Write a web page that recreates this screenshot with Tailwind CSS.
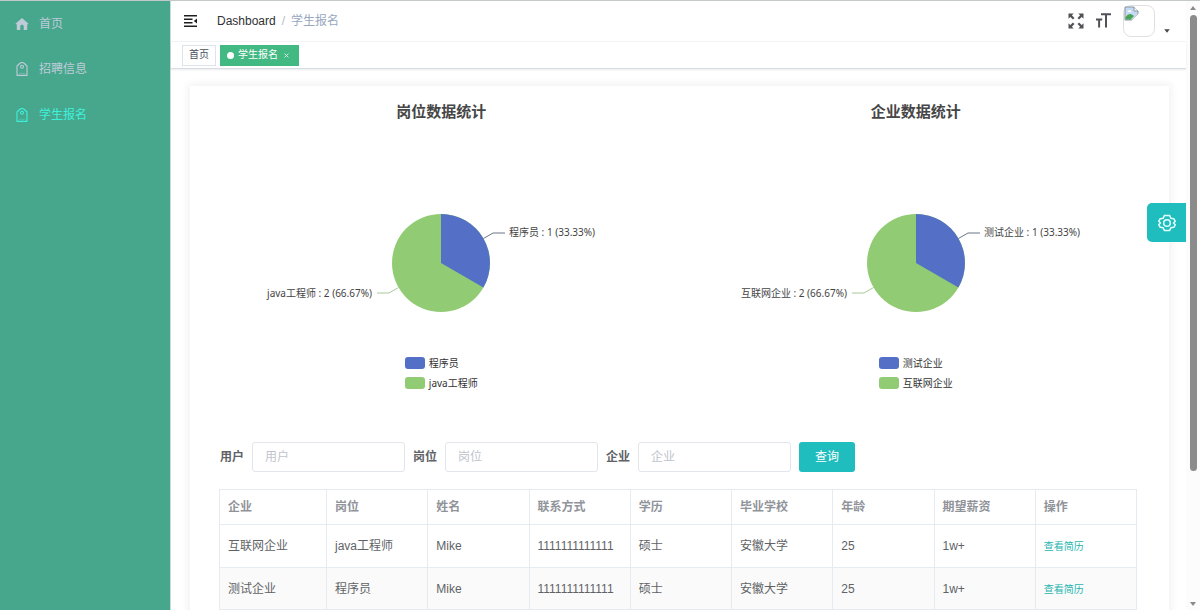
<!DOCTYPE html>
<html lang="zh-CN">
<head>
<meta charset="utf-8">
<title>学生报名</title>
<script src="https://cdn.jsdelivr.net/npm/@tailwindcss/browser@4"></script>
</head>
<body class="flex h-screen overflow-hidden border-t border-[#c4c8c8] bg-white font-['Liberation_Sans','Noto_Sans_CJK_SC',sans-serif] text-xs text-[#606266]">

<aside class="w-[171px] shrink-0 border-r border-[#c3ddd4] bg-[#47a78c]">
  <nav class="flex flex-col text-[#bfcbd9]">
    <a href="#" class="flex h-[45px] items-center gap-[10px] pl-[15px]">
      <svg class="size-[14px]" viewBox="0 0 14 14" fill="currentColor"><path d="M7 .9 13.2 6.4c.4.4.2.8-.3.8h-.7v5.2c0 .4-.2.6-.6.6H8.700V9.400c0-1-.7-1.600-1.700-1.600s-1.700.6-1.700 1.600V13H2.400c-.4 0-.6-.2-.6-.6V7.200h-.7c-.5 0-.7-.4-.3-.8z"/></svg>
      <span>首页</span>
    </a>
    <a href="#" class="flex h-[46px] items-center gap-[10px] pl-[15px]">
      <svg class="size-[14px]" viewBox="0 0 14 14" fill="none" stroke="currentColor" stroke-width="1.100"><path d="M2 13.400V4L5.200 1Q7 0 8.800 1L12 4V13.400Z" stroke-linejoin="round"/><circle cx="7" cy="4.800" r="1.500"/><path d="M4 11.400h6" opacity=".35"/></svg>
      <span>招聘信息</span>
    </a>
    <a href="#" aria-current="page" class="flex h-[45px] items-center gap-[10px] pl-[15px] text-[#3ff0dc]">
      <svg class="size-[14px]" viewBox="0 0 14 14" fill="none" stroke="currentColor" stroke-width="1.100"><path d="M2 13.400V4L5.200 1Q7 0 8.800 1L12 4V13.400Z" stroke-linejoin="round"/><circle cx="7" cy="4.800" r="1.500"/><path d="M4 11.400h6" opacity=".35"/></svg>
      <span>学生报名</span>
    </a>
  </nav>
</aside>

<div class="relative flex min-w-0 flex-1 flex-col">
  <header class="flex h-[41px] shrink-0 items-center border-b border-[#f3f4f5] pl-[13px] pr-[16px] pb-px">
    <button type="button" aria-label="收起菜单" class="mr-[20px]">
      <svg class="block h-[12px] w-[13px]" viewBox="0 0 13 12" fill="none" stroke="#1f1f1f" stroke-width="1.400"><path d="M0 .8h13M0 4.200h8.500M0 7.700h8.500M0 11.200h13"/><path d="M13 3.600v4.800L9.800 6z" fill="#1f1f1f" stroke="none"/></svg>
    </button>
    <nav class="flex flex-1 items-center gap-[6px]" aria-label="面包屑">
      <a href="#" class="text-[#303133]">Dashboard</a><span class="text-[#b5bac3]">/</span><span class="text-[#97a8be]">学生报名</span>
    </nav>
    <button type="button" aria-label="全屏" class="mr-[12px]">
      <svg class="block size-[16px]" viewBox="0 0 16 16" fill="#505257" stroke="#505257" stroke-width="2.200"><g id="arrow"><path d="M2.600 2.600 5.700 5.700" fill="none"/><path d="M.5.500h5.200L.5 5.700z" stroke="none"/></g><use href="#arrow" transform="rotate(90 8 8)"/><use href="#arrow" transform="rotate(180 8 8)"/><use href="#arrow" transform="rotate(270 8 8)"/></svg>
    </button>
    <button type="button" aria-label="字体大小" class="mr-[12px]">
      <svg class="block h-[15px] w-[15px]" viewBox="0 0 15 15" fill="none" stroke="#505257" stroke-width="2"><path d="M5 1.200H15M10 1.200V14.500M0 6.500h6.200M3.100 6.500v8"/></svg>
    </button>
    <button type="button" aria-label="用户菜单" class="flex items-end gap-[9px]">
      <span class="block size-[32px] rounded-lg border border-[#e0e0e0]">
        <svg class="block size-[16px]" viewBox="0 0 16 16"><path d="M1 1h9l4 4v3L8 14H1z" fill="#c5daf5" stroke="#8b949c"/><path d="M10 1v4h4" fill="#fff" stroke="#8b949c"/><path d="M3.500 6Q3.800 4 5.500 4.200 7.500 4.500 7.500 6z" fill="#fff"/><path d="M1.500 13.500V11Q5 6.500 8.500 9L10 10l-3.500 3.500z" fill="#49a553"/><path d="m7.500 14.500 7-7v2l-5 5z" fill="#fff"/></svg>
      </span>
      <svg class="mb-[4px] h-[4px] w-[6px]" viewBox="0 0 6 4"><path d="M.2.200h5.600L3 3.800z" fill="#45484d"/></svg>
    </button>
  </header>

  <div class="flex h-[27px] shrink-0 items-center gap-1 border-b border-[#d8dce5] pl-[11px] text-[10px] shadow-[0_1px_2px_rgba(0,0,0,0.08)]">
    <a href="#" class="flex h-[21px] items-center border border-[#dfe2e8] px-[6px] text-[#495060]">首页</a>
    <a href="#" class="flex h-[21px] items-center bg-[#42b983] pl-[7px] pr-[10px] text-white"><span class="mr-[4px] size-[7px] rounded-full bg-white"></span>学生报名<svg class="ml-[6px] size-[5px]" viewBox="0 0 5 5" stroke="#d9f1e6" stroke-width=".9"><path d="m.5.500 4 4m0-4-4 4"/></svg></a>
  </div>

  <main class="min-h-0 flex-1 overflow-hidden pl-[19px] pr-[17px] pt-[17px]">
    <section class="min-h-full bg-white pb-6 shadow-[0_0_8px_2px_rgba(0,0,0,0.06)]">
      <div class="grid grid-cols-2 pl-[14px] pr-4 pt-[14px]">
        <figure class="flex flex-col items-center">
          <figcaption class="text-[15px] leading-[24px] font-bold text-[#464646]">岗位数据统计</figcaption>
          <svg class="mt-[84px] block h-[110px] w-[400px] overflow-visible font-['Noto_Sans','Noto_Sans_CJK_SC',sans-serif]" viewBox="0 0 400 110" font-size="10" fill="#444">
            <circle cx="200" cy="55" r="49" fill="#91cc75"/>
            <path d="M200 55V6a49 49 0 0 1 42.400 73.500z" fill="#5470c6"/>
            <path d="M242.400 30.500 252 25h12" fill="none" stroke="#6b7488"/>
            <path d="M157.600 79.500 148 85h-12" fill="none" stroke="#a9c79a"/>
            <text x="268" y="28">程序员 : 1 (33.33%)</text>
            <text x="131" y="89" text-anchor="end">java工程师 : 2 (66.67%)</text>
          </svg>
          <ul class="mt-[37px] flex flex-col gap-[4px] font-['Noto_Sans','Noto_Sans_CJK_SC',sans-serif] text-[10px] leading-[16px] text-[#333]">
            <li class="flex items-center gap-1"><span class="h-[12px] w-[20px] rounded-[3px] bg-[#5470c6]"></span>程序员</li>
            <li class="flex items-center gap-1"><span class="h-[12px] w-[20px] rounded-[3px] bg-[#91cc75]"></span>java工程师</li>
          </ul>
        </figure>
        <figure class="flex flex-col items-center">
          <figcaption class="text-[15px] leading-[24px] font-bold text-[#464646]">企业数据统计</figcaption>
          <svg class="mt-[84px] block h-[110px] w-[400px] overflow-visible font-['Noto_Sans','Noto_Sans_CJK_SC',sans-serif]" viewBox="0 0 400 110" font-size="10" fill="#444">
            <circle cx="200" cy="55" r="49" fill="#91cc75"/>
            <path d="M200 55V6a49 49 0 0 1 42.400 73.500z" fill="#5470c6"/>
            <path d="M242.400 30.500 252 25h12" fill="none" stroke="#6b7488"/>
            <path d="M157.600 79.500 148 85h-12" fill="none" stroke="#a9c79a"/>
            <text x="268" y="28">测试企业 : 1 (33.33%)</text>
            <text x="131" y="89" text-anchor="end">互联网企业 : 2 (66.67%)</text>
          </svg>
          <ul class="mt-[37px] flex flex-col gap-[4px] font-['Noto_Sans','Noto_Sans_CJK_SC',sans-serif] text-[10px] leading-[16px] text-[#333]">
            <li class="flex items-center gap-1"><span class="h-[12px] w-[20px] rounded-[3px] bg-[#5470c6]"></span>测试企业</li>
            <li class="flex items-center gap-1"><span class="h-[12px] w-[20px] rounded-[3px] bg-[#91cc75]"></span>互联网企业</li>
          </ul>
        </figure>
      </div>

      <form class="mt-[51px] flex items-center gap-2 pl-[30px]">
        <label for="user" class="font-bold">用户</label>
        <input id="user" type="text" placeholder="用户" class="h-[30px] w-[153px] rounded-[3px] border border-[#e2e5eb] px-3 placeholder:text-[#c0c4cc]">
        <label for="post" class="font-bold">岗位</label>
        <input id="post" type="text" placeholder="岗位" class="h-[30px] w-[153px] rounded-[3px] border border-[#e2e5eb] px-3 placeholder:text-[#c0c4cc]">
        <label for="company" class="font-bold">企业</label>
        <input id="company" type="text" placeholder="企业" class="h-[30px] w-[153px] rounded-[3px] border border-[#e2e5eb] px-3 placeholder:text-[#c0c4cc]">
        <button type="button" class="h-[30px] w-[56px] rounded-[3px] bg-[#1fbdbd] text-white">查询</button>
      </form>

      <div class="mt-[17px] pl-[29px] pr-[32px]">
        <table class="w-full table-fixed border-collapse text-left [&_td]:border [&_td]:border-[#e6eaf1] [&_td]:px-2 [&_td]:py-0 [&_th]:border [&_th]:border-[#e6eaf1] [&_th]:px-2 [&_th]:py-0">
          <thead>
            <tr class="h-[35px] text-[#909399]"><th class="w-[107px]">企业</th><th>岗位</th><th>姓名</th><th>联系方式</th><th>学历</th><th>毕业学校</th><th>年龄</th><th>期望薪资</th><th>操作</th></tr>
          </thead>
          <tbody>
            <tr class="h-[43px]"><td>互联网企业</td><td>java工程师</td><td>Mike</td><td>1111111111111</td><td>硕士</td><td>安徽大学</td><td>25</td><td>1w+</td><td><a href="#" class="text-[10px] text-[#1fb5b0]">查看简历</a></td></tr>
            <tr class="h-[42px] bg-[#fafafa]"><td>测试企业</td><td>程序员</td><td>Mike</td><td>1111111111111</td><td>硕士</td><td>安徽大学</td><td>25</td><td>1w+</td><td><a href="#" class="text-[10px] text-[#1fb5b0]">查看简历</a></td></tr>
          </tbody>
        </table>
      </div>
    </section>
  </main>

  <button type="button" aria-label="设置" class="absolute top-[202px] right-0 flex h-[39px] w-[39px] items-center justify-center rounded-l-[5px] bg-[#1fbdbd]">
    <svg class="size-[18px]" viewBox="0 0 18 18" fill="none" stroke="#e6ffff" stroke-width="1.500" stroke-linejoin="round"><path d="M6.300 1.500h5.400L12.800 4.300l3 .4 1.500 2.600L15.500 9l1.800 1.700-1.500 2.600-3 .4-1.100 2.800H6.300L5.200 13.700l-3-.4L.7 10.700 2.500 9 .7 7.300l1.500-2.600 3-.4z"/><circle cx="9" cy="9" r="3.300"/></svg>
  </button>
</div>

<div class="flex w-[14px] shrink-0 flex-col items-center bg-[#fcfcfc] pt-[5px] pb-[4px]" aria-hidden="true">
  <svg class="h-[4px] w-[6px]" viewBox="0 0 6 4"><path d="M3 0 6 4H0z" fill="#8a8a8a"/></svg>
  <div class="mt-[5px] h-[76%] w-[7px] rounded-full bg-[#8b8b8b]"></div>
  <svg class="mt-auto h-[4px] w-[6px]" viewBox="0 0 6 4"><path d="M0 0h6L3 4z" fill="#8a8a8a"/></svg>
</div>
</body>
</html>
